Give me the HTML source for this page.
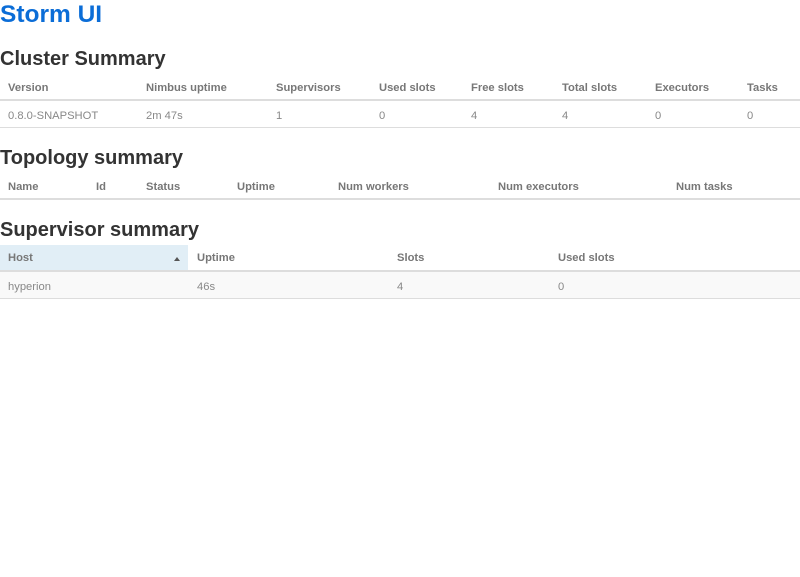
<!DOCTYPE html>
<html><head><meta charset="utf-8"><style>
body{margin:0;width:800px;height:577px;background:#fff;font-family:"Liberation Sans",Arial,sans-serif;position:relative;overflow:hidden}
.a{position:absolute;white-space:nowrap}
h1{position:absolute;margin:0;left:0;top:1px;font-size:24.5px;color:#0b6dd7;font-weight:bold}
h2{position:absolute;margin:0;left:0;font-size:20px;color:#333;font-weight:bold}
.th{position:absolute;font-size:11.2px;font-weight:bold;color:#777;white-space:nowrap}
.td{position:absolute;font-size:11.2px;color:#888;white-space:nowrap}
.ln{position:absolute;left:0;width:800px;background:#ddd}
</style></head><body>
<h1>Storm UI</h1>
<h2 style="top:48px">Cluster Summary</h2>
<div class="th" style="top:82px;left:8px">Version</div>
<div class="th" style="top:82px;left:146px">Nimbus uptime</div>
<div class="th" style="top:82px;left:276px">Supervisors</div>
<div class="th" style="top:82px;left:379px">Used slots</div>
<div class="th" style="top:82px;left:471px">Free slots</div>
<div class="th" style="top:82px;left:562px">Total slots</div>
<div class="th" style="top:82px;left:655px">Executors</div>
<div class="th" style="top:82px;left:747px">Tasks</div>
<div class="ln" style="top:99px;height:2px"></div>
<div class="td" style="top:110px;left:8px">0.8.0-SNAPSHOT</div>
<div class="td" style="top:110px;left:146px">2m 47s</div>
<div class="td" style="top:110px;left:276px">1</div>
<div class="td" style="top:110px;left:379px">0</div>
<div class="td" style="top:110px;left:471px">4</div>
<div class="td" style="top:110px;left:562px">4</div>
<div class="td" style="top:110px;left:655px">0</div>
<div class="td" style="top:110px;left:747px">0</div>
<div class="ln" style="top:127px;height:1px"></div>

<h2 style="top:147px">Topology summary</h2>
<div class="th" style="top:181px;left:8px">Name</div>
<div class="th" style="top:181px;left:96px">Id</div>
<div class="th" style="top:181px;left:146px">Status</div>
<div class="th" style="top:181px;left:237px">Uptime</div>
<div class="th" style="top:181px;left:338px">Num workers</div>
<div class="th" style="top:181px;left:498px">Num executors</div>
<div class="th" style="top:181px;left:676px">Num tasks</div>
<div class="ln" style="top:198px;height:2px"></div>

<h2 style="top:219px">Supervisor summary</h2>
<div class="a" style="top:245px;left:0;width:188px;height:26px;background:#e1eef6"></div>
<div class="a" style="top:257px;left:174px;width:0;height:0;border-left:3px solid transparent;border-right:3px solid transparent;border-bottom:4px solid #555"></div>
<div class="th" style="top:252px;left:8px">Host</div>
<div class="th" style="top:252px;left:197px">Uptime</div>
<div class="th" style="top:252px;left:397px">Slots</div>
<div class="th" style="top:252px;left:558px">Used slots</div>
<div class="ln" style="top:270px;height:2px"></div>
<div class="a" style="top:272px;left:0;width:800px;height:26px;background:#f9f9f9"></div>
<div class="td" style="top:281px;left:8px">hyperion</div>
<div class="td" style="top:281px;left:197px">46s</div>
<div class="td" style="top:281px;left:397px">4</div>
<div class="td" style="top:281px;left:558px">0</div>
<div class="ln" style="top:298px;height:1px"></div>
</body></html>
